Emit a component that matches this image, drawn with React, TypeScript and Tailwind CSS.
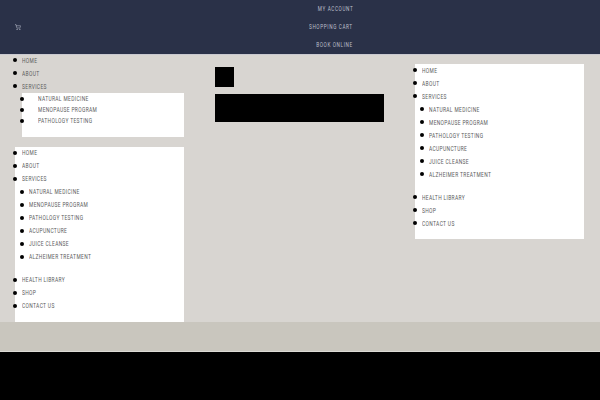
import React from 'react';
import { ShoppingCart } from 'lucide-react';

const subItems = ['NATURAL MEDICINE', 'MENOPAUSE PROGRAM', 'PATHOLOGY TESTING', 'ACUPUNCTURE', 'JUICE CLEANSE', 'ALZHEIMER TREATMENT'];

const bulletClass = "relative before:absolute before:left-[-9px] before:top-[4px] before:w-[4px] before:h-[4px] before:rounded-full before:bg-black before:content-['']";
const smallBulletClass = "relative before:absolute before:left-[-18px] before:top-[3.5px] before:w-[4px] before:h-[4px] before:rounded-full before:bg-black before:content-['']";

const labelSizes = {
  normal: 'h-[13px] leading-[13px]',
  top: 'h-[13px] leading-[14px]',
  small: 'h-[11px] leading-[13px]',
};

type LabelSize = 'normal' | 'top' | 'small';

function Label({ text, size = 'normal' }: { text: string; size?: LabelSize }) {
  return (
    <span className={`block origin-left scale-x-[0.7] whitespace-nowrap text-[7px] tracking-[0.5px] text-[#5c5c5c] ${labelSizes[size]}`}>
      {text}
    </span>
  );
}

function HeaderLink({ text }: { text: string }) {
  return (
    <a className="origin-right scale-x-[0.72] whitespace-nowrap text-[6.5px] leading-[9px] tracking-[0.85px] text-[#bcbfca]">
      {text}
    </a>
  );
}

function FullMenu({ size = 'normal' }: { size?: LabelSize }) {
  return (
    <ul className="bg-white pl-[7px] pb-[9px]">
      <li className={bulletClass}><Label text="HOME" size={size} /></li>
      <li className={bulletClass}><Label text="ABOUT" size={size} /></li>
      <li className={bulletClass}>
        <Label text="SERVICES" size={size} />
        <ul className="pl-[7px] pb-[10px]">
          {subItems.map((item) => (
            <li key={item} className={bulletClass}><Label text={item} size={size} /></li>
          ))}
        </ul>
      </li>
      <li className={bulletClass}><Label text="HEALTH LIBRARY" size={size} /></li>
      <li className={bulletClass}><Label text="SHOP" size={size} /></li>
      <li className={bulletClass}><Label text="CONTACT US" size={size} /></li>
    </ul>
  );
}

export default function App() {
  return (
    <div className="w-[600px] h-[400px] overflow-hidden font-['Roboto',sans-serif] bg-black">
      {/* header */}
      <header className="relative h-[54px] bg-[#2a3148] shadow-[0_1px_0_#c9c9d0] flex items-center pl-[15px] pr-[247px]">
        <ShoppingCart className="w-[6px] h-[6px] text-[#c5c9d6]" />
        <nav className="ml-auto flex flex-col items-end gap-[9px]">
          <HeaderLink text="MY ACCOUNT" />
          <HeaderLink text="SHOPPING CART" />
          <HeaderLink text="BOOK ONLINE" />
        </nav>
      </header>

      {/* main */}
      <main className="h-[268px] bg-[#d8d5d1] px-[15px] grid grid-cols-[169px_169px_169px] gap-x-[31px] items-start">
        <div>
          <ul className="pl-[7px]">
            <li className={bulletClass}><Label text="HOME" size="top" /></li>
            <li className={bulletClass}><Label text="ABOUT" size="top" /></li>
            <li className={bulletClass}>
              <Label text="SERVICES" size="top" />
              <ul className="bg-white pl-[16px] pb-[11px]">
                {subItems.slice(0, 3).map((item) => (
                  <li key={item} className={smallBulletClass}><Label text={item} size="small" /></li>
                ))}
              </ul>
            </li>
          </ul>
          <div className="mt-[10px]">
            <FullMenu />
          </div>
        </div>

        <div className="pt-[13px] flex flex-col gap-[7px]">
          <div className="w-[19px] h-[20px] bg-black" />
          <div className="h-[28px] bg-black" />
        </div>

        <div className="pt-[10px]">
          <FullMenu size="top" />
        </div>
      </main>

      {/* footer band */}
      <div className="h-[30px] bg-[#c9c6be] border-b border-[#dcdad5]" />
      <div className="h-[48px] bg-black" />
    </div>
  );
}
